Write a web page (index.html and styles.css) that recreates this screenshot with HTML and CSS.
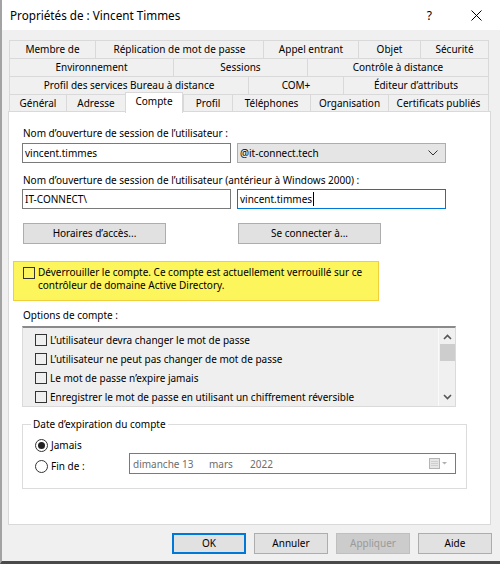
FILE: index.html
```html
<!DOCTYPE html>
<html lang="fr">
<head>
<meta charset="utf-8">
<title>Propriétés de : Vincent Timmes</title>
<link rel="stylesheet" href="styles.css">
</head>
<body>
<div class="window">
  <div class="titlebar">
    <span class="title">Propriétés de : Vincent Timmes</span>
    <span class="help">?</span>
    <svg class="close" viewBox="0 0 11 11"><path d="M0.5 0.5L10.5 10.5M10.5 0.5L0.5 10.5" stroke="#000" stroke-width="1" fill="none"/></svg>
  </div>

  <div class="tabs">
    <div class="tabrow r1">
      <div class="tab">Membre de</div>
      <div class="tab">Réplication de mot de passe</div>
      <div class="tab">Appel entrant</div>
      <div class="tab">Objet</div>
      <div class="tab">Sécurité</div>
    </div>
    <div class="tabrow r2">
      <div class="tab">Environnement</div>
      <div class="tab">Sessions</div>
      <div class="tab">Contrôle à distance</div>
    </div>
    <div class="tabrow r3">
      <div class="tab">Profil des services Bureau à distance</div>
      <div class="tab">COM+</div>
      <div class="tab">Éditeur d’attributs</div>
    </div>
    <div class="tabrow r4">
      <div class="tab">Général</div>
      <div class="tab">Adresse</div>
      <div class="tab active">Compte</div>
      <div class="tab">Profil</div>
      <div class="tab">Téléphones</div>
      <div class="tab">Organisation</div>
      <div class="tab">Certificats publiés</div>
    </div>
  </div>

  <div class="panel">
    <div class="label first">Nom d’ouverture de session de l’utilisateur :</div>
    <div class="row row1">
      <div class="input">vincent.timmes</div>
      <div class="combo">
        <span>@it-connect.tech</span>
        <svg class="chev" viewBox="0 0 10 6"><path d="M0.5 0.5L5 5L9.5 0.5" stroke="#333" stroke-width="1" fill="none"/></svg>
      </div>
    </div>
    <div class="label second">Nom d’ouverture de session de l’utilisateur (antérieur à Windows 2000) :</div>
    <div class="row row2">
      <div class="input">IT-CONNECT\</div>
      <div class="input focus"><span class="caret">vincent.timmes</span></div>
    </div>
    <div class="row btnrow">
      <div class="btn">Horaires d’accès...</div>
      <div class="btn">Se connecter à...</div>
    </div>
    <div class="unlock">
      <span class="check"></span>
      <span class="unlock-text">Déverrouiller le compte. Ce compte est actuellement verrouillé sur ce<br>contrôleur de domaine Active Directory.</span>
    </div>
    <div class="label opts">Options de compte :</div>
    <div class="list">
      <div class="items">
        <div class="item"><span class="check"></span>L’utilisateur devra changer le mot de passe</div>
        <div class="item"><span class="check"></span>L’utilisateur ne peut pas changer de mot de passe</div>
        <div class="item"><span class="check"></span>Le mot de passe n’expire jamais</div>
        <div class="item"><span class="check"></span>Enregistrer le mot de passe en utilisant un chiffrement réversible</div>
      </div>
      <div class="scroll">
        <svg class="arrow up" viewBox="0 0 9 6"><path d="M1 5L4.5 1.5L8 5" stroke="#555" stroke-width="1.6" fill="none"/></svg>
        <div class="thumb"></div>
        <div class="track"></div>
        <svg class="arrow down" viewBox="0 0 9 6"><path d="M1 1L4.5 4.5L8 1" stroke="#555" stroke-width="1.6" fill="none"/></svg>
      </div>
    </div>
    <div class="group">
      <div class="legend">Date d’expiration du compte</div>
      <div class="radiorow r-jamais">
        <span class="radio on"></span>Jamais
      </div>
      <div class="radiorow r-fin">
        <div class="finlabel"><span class="radio"></span>Fin de :</div>
        <div class="date">
          <span class="d1">dimanche 13</span>
          <span class="d2">mars</span>
          <span class="d3">2022</span>
          <svg class="cal" viewBox="0 0 20 12"><rect x="0.5" y="0.5" width="10" height="10" fill="#e6e6e6" stroke="#b5b5b5"/><path d="M2 3.5H9M2 5.5H9M2 7.5H9" stroke="#cfcfcf"/><path d="M13 4L15.5 6.5L18 4Z" fill="#b0b0b0"/></svg>
        </div>
      </div>
    </div>
  </div>

  <div class="footer">
    <div class="btn fbtn default">OK</div>
    <div class="btn fbtn">Annuler</div>
    <div class="btn fbtn disabled">Appliquer</div>
    <div class="btn fbtn">Aide</div>
  </div>
</div>
</body>
</html>
```
FILE: styles.css
```css
* { box-sizing: border-box; margin: 0; padding: 0; }
html, body { width: 500px; height: 564px; overflow: hidden; }
body {
  font-family: "Noto Sans", "Liberation Sans", sans-serif;
  font-size: 10px;
  color: #000;
  background: #f0f0f0;
}
.window {
  width: 500px;
  height: 564px;
  border-left: 2px solid #a3a3a3;
  border-bottom: 3px solid #4a4a4a;
  background: #f0f0f0;
  display: flex;
  flex-direction: column;
}
.window > * { flex: none; }
.titlebar {
  height: 30px;
  background: #fff;
  display: flex;
  align-items: center;
  padding-left: 8px;
}
.title { flex: 1; font-size: 11.7px; }
.help { font-size: 12px; margin-right: 39px; }
.close { width: 11px; height: 11px; margin-right: 18px; }

.tabs { margin: 10px 0 0 7px; width: 480px; }
.tabrow { display: grid; height: 18px; }
.r1 { grid-template-columns: 86px 168px 95px 62px 69px; }
.r2 { grid-template-columns: 164px 134px 182px; }
.r3 { grid-template-columns: 239px 95px 146px; }
.r4 { grid-template-columns: 57px 59px 58px 49px 78px 78px 101px; }
.tab {
  border: 1px solid #d9d9d9;
  border-right: none;
  border-bottom: none;
  text-align: center;
  line-height: 17px;
  white-space: nowrap;
  overflow: hidden;
  background: #f0f0f0;
}
.tab:last-child { border-right: 1px solid #d9d9d9; }
.tab.active {
  background: #fff;
  position: relative;
  z-index: 1;
  margin-top: -2px;
  height: 21px;
  border-right: 1px solid #d9d9d9;
  line-height: 16px;
}

.panel {
  margin: -1px 0 0 6px;
  width: 483px;
  height: 414px;
  background: #fff;
  border: 1px solid #d9d9d9;
  display: flex;
  flex-direction: column;
  padding-left: 13px;
}
.panel > * { flex: none; }
.label { line-height: 16px; margin-left: 1px; white-space: nowrap; }
.label.first { margin-top: 13px; }
.label.second { margin-top: 9px; }
.label.opts { margin-top: 6px; }
.row { display: flex; gap: 6px; }
.row1 { margin-top: 2px; }
.row2 { margin-top: 1px; }
.input {
  width: 209px;
  height: 20px;
  border: 1px solid #7a7a7a;
  background: #fff;
  padding-left: 2px;
  line-height: 18px;
}
.input.focus { border-color: #0078d7; }
.caret { border-right: 1px solid #000; padding-right: 1px; }
.combo {
  width: 209px;
  height: 20px;
  border: 1px solid #adadad;
  background: #e5e5e5;
  padding: 0 7px 0 2px;
  display: flex;
  align-items: center;
  justify-content: space-between;
}
.chev { width: 10px; height: 6px; }
.btnrow { margin-top: 14px; gap: 72px; margin-left: 1px; }
.btn {
  width: 143px;
  height: 21px;
  border: 1px solid #adadad;
  background: #e1e1e1;
  text-align: center;
  line-height: 19px;
}
.unlock {
  margin: 17px 0 0 -9px;
  width: 366px;
  height: 40px;
  background: #fcf55c;
  border: 1px solid #efcf3a;
  display: flex;
  align-items: flex-start;
  padding: 4px 0 0 9px;
  line-height: 13px;
}
.check {
  width: 12px;
  height: 12px;
  border: 1px solid #333;
  flex: none;
  margin-right: 3px;
}
.unlock .check { margin-top: 1px; }
.list {
  margin-top: 3px;
  width: 434px;
  height: 81px;
  border: 1px solid #dadada;
  border-top: 2px solid #8a8a8a;
  background: #efefef;
  display: flex;
}
.items { flex: 1; padding: 2px 0 0 12px; }
.item { height: 19px; display: flex; align-items: center; white-space: nowrap; }
.item .check { margin-right: 3px; }
.scroll {
  width: 17px;
  display: flex;
  flex-direction: column;
  align-items: center;
  background: #f0f0f0;
  border-left: 1px solid #fafafa;
}
.arrow { width: 9px; height: 6px; }
.arrow.up { margin-top: 6px; }
.thumb { width: 15px; height: 17px; background: #cdcdcd; margin-top: 4px; }
.track { flex: 1; }
.arrow.down { margin-bottom: 6px; }

.group {
  margin-top: 17px;
  width: 445px;
  height: 65px;
  border: 1px solid #dcdcdc;
  padding-left: 12px;
}
.legend {
  margin: -9px 0 0 -4px;
  padding: 0 2px;
  line-height: 16px;
  background: #fff;
  width: max-content;
}
.radiorow { display: flex; align-items: center; white-space: nowrap; }
.r-jamais { margin-top: 5px; height: 16px; }
.r-fin { align-items: flex-start; height: 21px; }
.finlabel { width: 94px; display: flex; align-items: center; height: 16px; margin-top: 5px; }
.radio {
  width: 13px;
  height: 13px;
  border: 1px solid #333;
  border-radius: 50%;
  margin-right: 3px;
  flex: none;
  display: flex;
  align-items: center;
  justify-content: center;
}
.radio.on::after {
  content: "";
  width: 7px;
  height: 7px;
  border-radius: 50%;
  background: #222;
}
.date {
  width: 327px;
  height: 21px;
  border: 1px solid #7a7a7a;
  background: #fff;
  color: #6d6d6d;
  display: flex;
  align-items: center;
  padding-left: 3px;
}
.d1 { width: 76px; }
.d2 { width: 41px; }
.d3 { flex: 1; }
.cal { width: 20px; height: 12px; margin-right: 6px; }

.footer {
  margin-top: 8px;
  display: flex;
  justify-content: flex-end;
  gap: 8px;
  padding-right: 8px;
}
.fbtn { width: 74px; }
.default { border-color: #0078d7; box-shadow: inset 0 0 0 1px #0078d7; }
.disabled { background: #cccccc; border-color: #bfbfbf; color: #9a9a9a; }
```
